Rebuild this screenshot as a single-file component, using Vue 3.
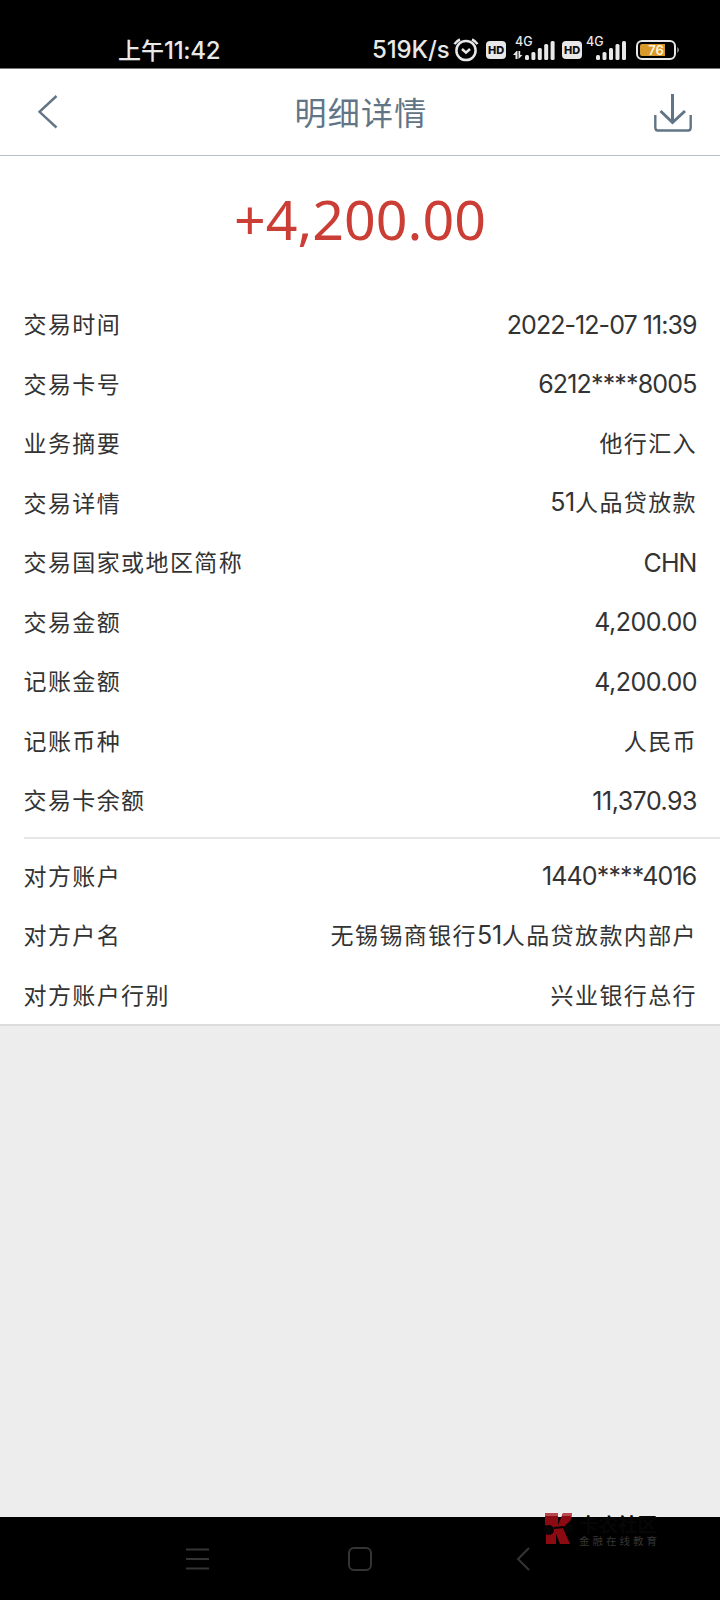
<script setup>
const groups = [
  [
    { label: '交易时间', value: '2022-12-07 11:39', fit: 'date' },
    { label: '交易卡号', value: '6212****8005', fit: 'card' },
    { label: '业务摘要', value: '他行汇入' },
    { label: '交易详情', value: '51人品贷放款' },
    { label: '交易国家或地区简称', value: 'CHN', fit: 'code' },
    { label: '交易金额', value: '4,200.00', fit: 'money' },
    { label: '记账金额', value: '4,200.00', fit: 'money' },
    { label: '记账币种', value: '人民币' },
    { label: '交易卡余额', value: '11,370.93', fit: 'money' }
  ],
  [
    { label: '对方账户', value: '1440****4016', fit: 'card' },
    { label: '对方户名', value: '无锡锡商银行51人品贷放款内部户' },
    { label: '对方账户行别', value: '兴业银行总行' }
  ]
]

const bars = [5, 8, 12, 16, 19]

// 数字和汉字分段，字号不同
function segments(value) {
  return value.match(/[\x20-\x7e]+|[^\x20-\x7e]+/g).map(text => ({
    text,
    latin: /^[\x20-\x7e]/.test(text)
  }))
}
</script>

<template>
  <div class="screen">
    <div class="status-bar">
      <span class="status-time">上午<span class="status-num">11:42</span></span>
      <div class="status-right">
        <span class="speed">519K/s</span>
        <svg class="alarm" width="26" height="24" viewBox="0 0 26 24" fill="none" stroke="#e8e8e8" stroke-width="2.5">
          <circle cx="13" cy="12.5" r="9.6" />
          <path d="M9 11l4 3.6 4-3.6M1.5 6.2Q3.5 3 7 1.5M24.5 6.2Q22.5 3 19 1.5" />
        </svg>
        <span class="hd">HD</span>
        <svg class="signal first" width="43" height="28" viewBox="0 0 43 28">
          <text x="2" y="13" class="net">4G</text>
          <g fill="#e8e8e8">
            <path d="M0 22l3.5-4h1v8H2.5v-4zM5.5 18h1.7v4H9.5l-4 4z" />
            <rect v-for="(h, i) in bars" :key="i" :x="12 + i * 6.4" :y="27 - h" width="4" :height="h" rx="1.5" />
          </g>
        </svg>
        <span class="hd">HD</span>
        <svg class="signal" width="42" height="28" viewBox="0 0 42 28">
          <text x="0" y="13" class="net">4G</text>
          <g fill="#e8e8e8">
            <rect v-for="(h, i) in bars" :key="i" :x="10 + i * 6.5" :y="27 - h" width="4" :height="h" rx="1.5" />
          </g>
        </svg>
        <svg class="battery" width="44" height="20" viewBox="0 0 44 20">
          <rect x="1" y="1" width="38" height="18" rx="5" fill="none" stroke="#e8e8e8" stroke-width="2" />
          <path d="M6 4H29V16H6Q4 16 4 14V6Q4 4 6 4z" fill="#d99a2b" />
          <path d="M41.5 7q2.3 3 0 6z" fill="#e8e8e8" />
          <text x="20" y="14.8" text-anchor="middle" class="level">76</text>
        </svg>
      </div>
    </div>

    <header class="nav">
      <svg class="back" width="20" height="34" viewBox="0 0 20 34" fill="none" stroke="#617586" stroke-width="2.4">
        <path d="M18.5 1L1.5 16.8L18.5 32.5" />
      </svg>
      <h1 class="title">明细详情</h1>
      <svg class="download" width="38" height="40" viewBox="0 0 38 40" fill="none" stroke="#617586" stroke-width="3">
        <path d="M18.5 1V30M6.5 18L18.5 29.5L31 18" />
        <path d="M1.3 22V34.5Q1.3 37.5 3.8 37.5H34.2Q36.7 37.5 36.7 34.5V22" stroke-width="2.4" />
      </svg>
    </header>

    <main class="detail">
      <div class="amount">+4,200.00</div>
      <div v-for="(rows, i) in groups" :key="i" class="group">
        <div v-for="row in rows" :key="row.label" class="row">
          <span class="label">{{ row.label }}</span>
          <span class="value" :class="row.fit"><span
            v-for="(seg, j) in segments(row.value)"
            :key="j"
            :class="{ latin: seg.latin }"
          >{{ seg.text }}</span></span>
        </div>
      </div>
    </main>

    <footer class="sys-nav">
      <svg width="24" height="24" viewBox="0 0 24 24" fill="none" stroke="#343434" stroke-width="2">
        <path d="M0 2.5H23M0 12H23M0 21.5H23" />
      </svg>
      <svg width="24" height="24" viewBox="0 0 24 24" fill="none" stroke="#343434" stroke-width="2">
        <rect x="1" y="1" width="22" height="22" rx="5" />
      </svg>
      <svg width="24" height="24" viewBox="0 0 24 24" fill="none" stroke="#343434" stroke-width="2">
        <path d="M19 1L8 12L19 23" />
      </svg>
      <div class="watermark">
        <svg width="32" height="34" viewBox="0 0 32 34">
          <path d="M3 1H16V13L21 1H30L29 8L21 16L28 32H18L14 22V32H4V21L8 19V15L3 13z" fill="#8c0a12" />
          <path d="M3 1H16V4H3zM21 1H30V4H20z" fill="#b94750" />
          <circle cx="7" cy="18" r="5" fill="#050505" />
          <circle cx="27" cy="16" r="4.5" fill="#050505" />
          <path d="M12 16L22 15" stroke="#050505" stroke-width="2" />
        </svg>
        <div class="mark-text">
          <div class="mark-name">卡农社区</div>
          <div class="mark-sub">金融在线教育</div>
        </div>
      </div>
    </footer>
  </div>
</template>

<style>
body {
  margin: 0;
}
</style>

<style scoped>
.screen {
  display: flex;
  flex-direction: column;
  width: 720px;
  height: 1600px;
  overflow: hidden;
  background: #ededed;
  color: #333;
  font-family: 'Noto Sans CJK SC', sans-serif;
}

.status-bar {
  display: flex;
  justify-content: space-between;
  align-items: center;
  box-sizing: border-box;
  height: 69px;
  padding: 31px 40px 0 118px;
  background: #000;
  border-bottom: 1px solid #777;
  color: #e8e8e8;
  flex-shrink: 0;
}

.status-time {
  font-size: 23px;
  font-weight: 500;
  line-height: 36px;
  white-space: nowrap;
}

.status-num,
.speed {
  font-family: Inter, sans-serif;
  font-size: 24px;
  font-weight: 500;
}

.status-num {
  letter-spacing: -0.3px;
}

.status-right {
  display: flex;
  align-items: center;
}

.speed {
  width: 81px;
  letter-spacing: -0.1px;
  white-space: nowrap;
}

.hd {
  width: 20px;
  height: 18px;
  border-radius: 4px;
  background: #e8e8e8;
  color: #111;
  font: 800 11px/18px Inter, sans-serif;
  text-align: center;
}

.alarm {
  margin-right: 7px;
}

.signal {
  margin: -6px 8px 0 4px;
}

.signal.first {
  margin: -6px 6px 0 7px;
}

.net {
  fill: #e8e8e8;
  font: 500 12.5px Inter, sans-serif;
}

.level {
  fill: #fff3d8;
  font: 600 13px Inter, sans-serif;
}

.nav {
  display: flex;
  align-items: center;
  justify-content: space-between;
  box-sizing: border-box;
  height: 87px;
  padding: 0 28px 0 38px;
  background: #fff;
  border-bottom: 1px solid #b3c0c4;
  flex-shrink: 0;
}

.back {
  margin-right: 10px;
}

.title {
  margin: 0;
  padding-bottom: 3px;
  color: #617586;
  font-size: 32px;
  font-weight: 400;
  letter-spacing: 1.2px;
}

.download {
  margin-top: 1px;
}

.detail {
  background: #fff;
  border-bottom: 2px solid #dcdcdc;
}

.amount {
  height: 138px;
  line-height: 125px;
  color: #cb3e35;
  font-family: 'Noto Sans', sans-serif;
  font-size: 55.5px;
  text-align: center;
  white-space: nowrap;
}

.group + .group {
  margin: 7px 0 0 24px;
  padding-top: 7px;
  border-top: 2px solid #e6e6e6;
}

.group + .group .row {
  margin-left: -24px;
}

.row {
  display: flex;
  justify-content: space-between;
  align-items: center;
  height: 59.5px;
  padding: 0 23px 0 23.5px;
  line-height: 36px;
  white-space: nowrap;
}

.label,
.value {
  font-size: 23px;
  letter-spacing: 1.4px;
}

.label,
.value {
  padding-bottom: 1.5px;
}

.latin {
  font-family: Inter, sans-serif;
  font-size: 25px;
  letter-spacing: -0.3px;
}

.date .latin {
  letter-spacing: -0.95px;
}

.card .latin {
  letter-spacing: -0.85px;
}

.code .latin {
  letter-spacing: -0.9px;
}

.money .latin {
  letter-spacing: -0.5px;
}

.date,
.card,
.code,
.money {
  padding-top: 1px;
  padding-bottom: 0;
}

.date,
.card,
.code {
  padding-right: 0.5px;
}

.sys-nav {
  position: relative;
  display: flex;
  align-items: center;
  justify-content: space-between;
  box-sizing: border-box;
  height: 83px;
  margin-top: auto;
  padding: 0 186px 0 185.5px;
  background: #000;
  flex-shrink: 0;
}

.watermark {
  position: absolute;
  left: 542px;
  top: -5px;
  display: flex;
  gap: 5px;
}

.mark-text {
  white-space: nowrap;
}

.mark-name {
  height: 22px;
  line-height: 24px;
  color: #060606;
  font-size: 19.5px;
  font-weight: 700;
}

.mark-sub {
  color: #363636;
  font-size: 10.5px;
  line-height: 14px;
  letter-spacing: 3px;
}
</style>
